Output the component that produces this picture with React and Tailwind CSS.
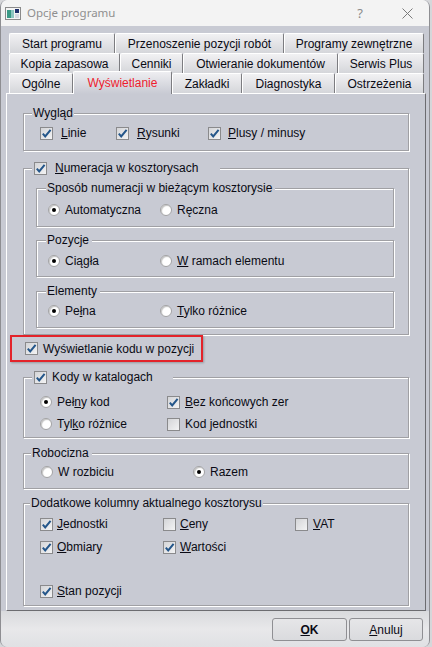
import clsx from "clsx";

const tabRows = [
  [
    { label: "Start programu", w: "w-[106px]" },
    { label: "Przenoszenie pozycji robót", w: "w-[169px]" },
    { label: "Programy zewnętrzne", w: "w-[140px]" },
  ],
  [
    { label: "Kopia zapasowa", w: "w-[111px]" },
    { label: "Cenniki", w: "w-[63px]" },
    { label: "Otwieranie dokumentów", w: "w-[155px]" },
    { label: "Serwis Plus", w: "w-[86px]" },
  ],
  [
    { label: "Ogólne", w: "w-[64px]" },
    { label: "Wyświetlanie", w: "w-[99px]", active: true },
    { label: "Zakładki", w: "w-[70px]" },
    { label: "Diagnostyka", w: "w-[93px]" },
    { label: "Ostrzeżenia", w: "w-[89px]" },
  ],
];

function Tab({ label, w, active }) {
  if (active) {
    return (
      <div
        className={clsx(
          "relative z-10 -mb-px h-[23px] flex items-center justify-center border-t border-l border-white border-r border-r-[#7c7c80] rounded-t-[2px] bg-linear-to-b from-[#eeeef1] to-[#c8cad3] text-[#ee1c2e]",
          w
        )}
      >
        {label}
      </div>
    );
  }
  return (
    <div
      className={clsx(
        "h-[20px] flex items-center justify-center border-t border-l border-white border-r border-r-[#7c7c80] rounded-t-[2px] bg-linear-to-b from-[#f1f1f3] to-[#d5d6da]",
        w
      )}
    >
      {label}
    </div>
  );
}

function Check({ on }) {
  return (
    <span className="w-[13px] h-[13px] shrink-0 border border-[#8a8a8c] bg-linear-to-br from-[#d4d5d8] to-[#f3f3f4] flex items-center justify-center">
      {on && (
        <svg width="11" height="11" viewBox="0 0 11 11">
          <path d="M1.8 5.6 L4.2 8.4 L9.6 1.8" fill="none" stroke="#24568a" strokeWidth="2" />
        </svg>
      )}
    </span>
  );
}

function Radio({ on }) {
  return (
    <span className="w-[12px] h-[12px] shrink-0 rounded-full border border-[#a2a2a4] bg-white shadow-[inset_1px_1px_1px_#c4c4c4] flex items-center justify-center">
      {on && <span className="w-[4px] h-[4px] rounded-full bg-black" />}
    </span>
  );
}

function Item({ radio, on, gap = "gap-[5px]", className, children }) {
  return (
    <div className={clsx("flex items-center h-[14px]", gap, className)}>
      {radio ? <Radio on={on} /> : <Check on={on} />}
      <span className="whitespace-nowrap">{children}</span>
    </div>
  );
}

function Group({ legend, legendClass = "ml-[8px] px-[1px]", className, children }) {
  return (
    <fieldset
      className={clsx(
        "border border-[#a0a0a4] shadow-[inset_1px_1px_0_#ffffff,1px_1px_0_#ffffff] min-w-0",
        className
      )}
    >
      <legend className={clsx("bg-[#c8cad3] h-[14px] flex items-center leading-[14px]", legendClass)}>
        {legend}
      </legend>
      {children}
    </fieldset>
  );
}

export default function App() {
  return (
    <div className="w-[432px] h-[647px] bg-[#d6d7da] font-['Liberation_Sans',Arial,sans-serif] text-[12px] leading-[14px] text-[#0a0a14]">
      <div className="w-[430px] h-[647px] flex flex-col border-x border-[#8e8e92] rounded-[7px] overflow-hidden bg-[#c8cad3]">
        {/* title bar */}
        <div className="h-[26px] shrink-0 bg-[#f3f3f3] flex items-center pl-[4px]">
          <svg width="16" height="13" viewBox="0 0 16 13">
            <rect x="0.5" y="0.5" width="15" height="12" fill="#f4f4f4" stroke="#8a8a8a" />
            <rect x="2" y="3" width="4" height="8" fill="#3b9a86" />
            <rect x="6" y="3" width="3" height="8" fill="#8cc6c0" />
            <rect x="10" y="2" width="4" height="4" fill="#1d2f6a" />
            <rect x="10" y="7" width="4" height="4" fill="#d4d8e0" />
          </svg>
          <span className="ml-[6px] font-['Noto_Sans',sans-serif] text-[11.5px] text-[#8f8f8f]">Opcje programu</span>
          <span className="ml-auto font-['Noto_Sans',sans-serif] text-[13px] text-[#8a8a8a]">?</span>
          <svg className="ml-[39px] mr-[16px]" width="11" height="11" viewBox="0 0 11 11">
            <path d="M0.5 0.5 L10.5 10.5 M10.5 0.5 L0.5 10.5" stroke="#7a7a7a" strokeWidth="1" />
          </svg>
        </div>

        {/* tabs */}
        <div className="pt-[7px] pl-[8px] flex flex-col">
          {tabRows.map((row, i) => (
            <div key={i} className="flex items-end h-[20px]">
              {row.map((t) => (
                <Tab key={t.label} {...t} />
              ))}
            </div>
          ))}
        </div>

        {/* panel */}
        <div className="ml-[5px] w-[420px] h-[518px] shrink-0 border-t border-l border-white border-r border-b border-r-[#6c6c70] border-b-[#6c6c70] px-[16px] pt-[12px] flex flex-col">
          <Group legend="Wygląd">
            <div className="flex pl-[16px] pt-[6px] pb-[10px]">
              <Item on gap="gap-[8px]" className="w-[76px]">
                <u>L</u>inie
              </Item>
              <Item on gap="gap-[8px]" className="w-[92px]">
                <u>R</u>ysunki
              </Item>
              <Item on gap="gap-[7px]">
                <u>P</u>lusy / minusy
              </Item>
            </div>
          </Group>

          <Group
            className="mt-[10px]"
            legendClass="ml-[8px] pl-[2px] pr-[22px]"
            legend={
              <Item on gap="gap-[8px]">
                <u>N</u>umeracja w kosztorysach
              </Item>
            }
          >
            <div className="pl-[12px] pr-[14px] pt-[6px] pb-[6px] flex flex-col">
              <Group legend="Sposób numeracji w bieżącym kosztorysie" legendClass="ml-[9px] px-[1px] pr-[3px]">
                <div className="flex pl-[11px] pt-[8px] pb-[9px]">
                  <Item radio on className="w-[112px]">
                    Automatyczna
                  </Item>
                  <Item radio>Ręczna</Item>
                </div>
              </Group>
              <Group className="mt-[6px]" legend="Pozycje" legendClass="ml-[9px] px-[1px] pr-[3px]">
                <div className="flex pl-[11px] pt-[7px] pb-[8px]">
                  <Item radio on className="w-[112px]">
                    Ciągła
                  </Item>
                  <Item radio>
                    <u>W</u> ramach elementu
                  </Item>
                </div>
              </Group>
              <Group className="mt-[7px]" legend="Elementy" legendClass="ml-[9px] px-[1px] pr-[3px]">
                <div className="flex pl-[11px] pt-[6px] pb-[9px]">
                  <Item radio on className="w-[112px]">
                    Pe<u>ł</u>na
                  </Item>
                  <Item radio>
                    <u>T</u>ylko różnice
                  </Item>
                </div>
              </Group>
            </div>
          </Group>

          <div className="-ml-[13px] w-[193px] h-[27px] border-2 border-[#e3232a] shadow-[1px_1px_2px_rgba(0,0,0,0.25)] flex items-center pl-[13px]">
            <Item on>Wyświetlanie kodu w pozycji</Item>
          </div>

          <Group
            className="mt-[8px]"
            legendClass="ml-[8px] pl-[2px] pr-[20px]"
            legend={<Item on>Kody w katalogach</Item>}
          >
            <div className="grid grid-cols-[127px_auto] gap-y-[8px] pl-[16px] pt-[11px] pb-[6px]">
              <Item radio on>
                Peł<u>n</u>y kod
              </Item>
              <Item on>
                <u>B</u>ez końcowych zer
              </Item>
              <Item radio>
                Tyl<u>k</u>o różnice
              </Item>
              <Item>
                Kod <u>j</u>ednostki
              </Item>
            </div>
          </Group>

          <Group className="mt-[8px]" legend="Robocizna" legendClass="ml-[7px] px-[1px] pr-[3px]">
            <div className="flex pl-[17px] pt-[5px] pb-[9px]">
              <Item radio className="w-[152px]">
                W rozbiciu
              </Item>
              <Item radio on>
                Razem
              </Item>
            </div>
          </Group>

          <Group className="mt-[7px]" legend="Dodatkowe kolumny aktualnego kosztorysu" legendClass="ml-[6px] px-[1px]">
            <div className="flex flex-col pl-[16px] pt-[7px] pb-[7px]">
              <div className="flex">
                <Item on gap="gap-[4px]" className="w-[123px]">
                  <u>J</u>ednostki
                </Item>
                <Item gap="gap-[4px]" className="w-[132px]">
                  <u>C</u>eny
                </Item>
                <Item gap="gap-[5px]">
                  <u>V</u>AT
                </Item>
              </div>
              <div className="flex mt-[9px]">
                <Item on gap="gap-[4px]" className="w-[123px]">
                  <u>O</u>bmiary
                </Item>
                <Item on gap="gap-[4px]">
                  <u>W</u>artości
                </Item>
              </div>
              <div className="flex mt-[30px]">
                <Item on gap="gap-[4px]">
                  <u>S</u>tan pozycji
                </Item>
              </div>
            </div>
          </Group>
        </div>

        {/* buttons */}
        <div className="flex-1 bg-linear-to-b from-[#d9dadd] via-[#e8e8ea] to-[#e0e1e4] flex items-start justify-end pt-[7px] pr-[6px] gap-[2px]">
          <button className="w-[75px] h-[23px] rounded-[3px] border border-[#8f8f93] bg-linear-to-b from-[#e6e6e8] to-[#dadbde] font-bold">
            <u>O</u>K
          </button>
          <button className="w-[74px] h-[23px] rounded-[3px] border border-[#8f8f93] bg-linear-to-b from-[#e6e6e8] to-[#dadbde]">
            <u>A</u>nuluj
          </button>
        </div>
      </div>
    </div>
  );
}
